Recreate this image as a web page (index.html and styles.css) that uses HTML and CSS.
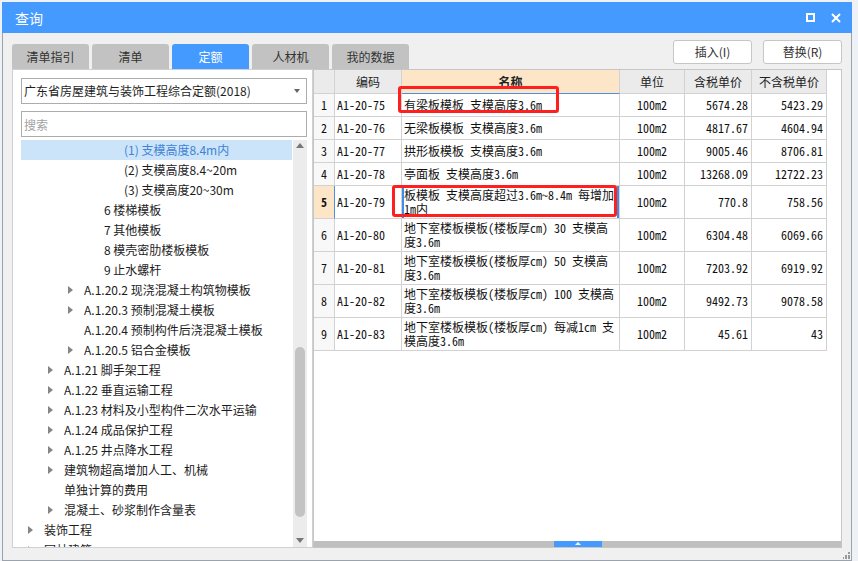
FILE: index.html
```html
<!DOCTYPE html>
<html lang="zh-CN">
<head>
<meta charset="utf-8">
<title>查询</title>
<link rel="stylesheet" href="styles.css">
</head>
<body>
<div class="dialog">
  <div class="titlebar">
    <span class="title">查询</span>
    <div class="win-ctrls">
      <span class="max-btn"></span>
      <svg class="close-btn" width="10" height="10" viewBox="0 0 10 10"><path d="M1 1L9 9M9 1L1 9" stroke="#fff" stroke-width="2"/></svg>
    </div>
  </div>
  <div class="toolbar">
    <div class="tabs">
      <div class="tab">清单指引</div>
      <div class="tab">清单</div>
      <div class="tab active">定额</div>
      <div class="tab">人材机</div>
      <div class="tab">我的数据</div>
    </div>
    <div class="actions">
      <button class="btn">插入(I)</button>
      <button class="btn">替换(R)</button>
    </div>
  </div>
  <div class="main">
    <div class="left-panel">
      <div class="select"><span class="select-text">广东省房屋建筑与装饰工程综合定额(2018)</span><span class="caret"></span></div>
      <input class="search" type="text" placeholder="搜索">
      <div class="tree">
        <div class="tree-rows">
          <div class="node l5 selected"><span class="arrow"></span><span>(1) 支模高度8.4m内</span></div>
          <div class="node l5"><span class="arrow"></span><span>(2) 支模高度8.4~20m</span></div>
          <div class="node l5"><span class="arrow"></span><span>(3) 支模高度20~30m</span></div>
          <div class="node l4"><span class="arrow"></span><span>6 楼梯模板</span></div>
          <div class="node l4"><span class="arrow"></span><span>7 其他模板</span></div>
          <div class="node l4"><span class="arrow"></span><span>8 模壳密肋楼板模板</span></div>
          <div class="node l4"><span class="arrow"></span><span>9 止水螺杆</span></div>
          <div class="node l3"><span class="arrow has"></span><span>A.1.20.2 现浇混凝土构筑物模板</span></div>
          <div class="node l3"><span class="arrow has"></span><span>A.1.20.3 预制混凝土模板</span></div>
          <div class="node l3"><span class="arrow"></span><span>A.1.20.4 预制构件后浇混凝土模板</span></div>
          <div class="node l3"><span class="arrow has"></span><span>A.1.20.5 铝合金模板</span></div>
          <div class="node l2"><span class="arrow has"></span><span>A.1.21 脚手架工程</span></div>
          <div class="node l2"><span class="arrow has"></span><span>A.1.22 垂直运输工程</span></div>
          <div class="node l2"><span class="arrow has"></span><span>A.1.23 材料及小型构件二次水平运输</span></div>
          <div class="node l2"><span class="arrow has"></span><span>A.1.24 成品保护工程</span></div>
          <div class="node l2"><span class="arrow has"></span><span>A.1.25 井点降水工程</span></div>
          <div class="node l2"><span class="arrow has"></span><span>建筑物超高增加人工、机械</span></div>
          <div class="node l2"><span class="arrow"></span><span>单独计算的费用</span></div>
          <div class="node l2"><span class="arrow has"></span><span>混凝土、砂浆制作含量表</span></div>
          <div class="node l1"><span class="arrow has"></span><span>装饰工程</span></div>
          <div class="node l1"><span class="arrow has"></span><span>园林建筑</span></div>
        </div>
        <div class="vscroll">
          <span class="vs-up"></span>
          <span class="vs-thumb"></span>
          <span class="vs-down"></span>
        </div>
      </div>
    </div>
    <div class="right-panel">
      <div class="grid-wrap">
        <table class="grid">
          <colgroup>
            <col class="c-no"><col class="c-code"><col class="c-name"><col class="c-unit"><col class="c-p1"><col class="c-p2">
          </colgroup>
          <thead>
            <tr>
              <th></th><th>编码</th><th class="sel-col">名称</th><th>单位</th><th>含税单价</th><th>不含税单价</th>
            </tr>
          </thead>
          <tbody>
            <tr><td class="no">1</td><td class="code">A1-20-75</td><td class="name">有梁板模板 支模高度3.6m</td><td class="unit">100m2</td><td class="num">5674.28</td><td class="num">5423.29</td></tr>
            <tr><td class="no">2</td><td class="code">A1-20-76</td><td class="name">无梁板模板 支模高度3.6m</td><td class="unit">100m2</td><td class="num">4817.67</td><td class="num">4604.94</td></tr>
            <tr><td class="no">3</td><td class="code">A1-20-77</td><td class="name">拱形板模板 支模高度3.6m</td><td class="unit">100m2</td><td class="num">9005.46</td><td class="num">8706.81</td></tr>
            <tr><td class="no">4</td><td class="code">A1-20-78</td><td class="name">亭面板 支模高度3.6m</td><td class="unit">100m2</td><td class="num">13268.09</td><td class="num">12722.23</td></tr>
            <tr class="tall current"><td class="no">5</td><td class="code">A1-20-79</td><td class="name focus">板模板 支模高度超过3.6m~8.4m 每增加1m内</td><td class="unit">100m2</td><td class="num">770.8</td><td class="num">758.56</td></tr>
            <tr class="tall"><td class="no">6</td><td class="code">A1-20-80</td><td class="name">地下室楼板模板(楼板厚cm) 30 支模高度3.6m</td><td class="unit">100m2</td><td class="num">6304.48</td><td class="num">6069.66</td></tr>
            <tr class="tall"><td class="no">7</td><td class="code">A1-20-81</td><td class="name">地下室楼板模板(楼板厚cm) 50 支模高度3.6m</td><td class="unit">100m2</td><td class="num">7203.92</td><td class="num">6919.92</td></tr>
            <tr class="tall"><td class="no">8</td><td class="code">A1-20-82</td><td class="name">地下室楼板模板(楼板厚cm) 100 支模高度3.6m</td><td class="unit">100m2</td><td class="num">9492.73</td><td class="num">9078.58</td></tr>
            <tr class="tall"><td class="no">9</td><td class="code">A1-20-83</td><td class="name">地下室楼板模板(楼板厚cm) 每减1cm 支模高度3.6m</td><td class="unit">100m2</td><td class="num">45.61</td><td class="num">43</td></tr>
          </tbody>
        </table>
      </div>
      <div class="hscroll"><span class="hthumb"></span></div>
      <div class="mark mark1"></div>
      <div class="mark mark2"></div>
    </div>
  </div>
  <div class="statusbar">
    <svg class="grip" width="7" height="7" viewBox="0 0 7 7">
      <rect x="5" y="0" width="2" height="2" fill="#9a9a9a"/>
      <rect x="2" y="3" width="2" height="2" fill="#9a9a9a"/>
      <rect x="5" y="3" width="2" height="2" fill="#9a9a9a"/>
      <rect x="-1" y="5" width="2" height="2" fill="#9a9a9a"/>
      <rect x="2" y="5" width="2" height="2" fill="#9a9a9a"/>
      <rect x="5" y="5" width="2" height="2" fill="#9a9a9a"/>
    </svg>
  </div>
</div>
</body>
</html>
```
FILE: styles.css
```css
* { box-sizing: border-box; }
html, body { margin: 0; padding: 0; }
body {
  width: 858px;
  height: 561px;
  overflow: hidden;
  background: #eef2f7;
  font-family: "Noto Sans CJK SC", "Microsoft YaHei", sans-serif;
  font-size: 12px;
  color: #222;
}

.dialog {
  margin: 2px 0 0 2px;
  width: 850px;
  height: 559px;
  background: #f0f0f0;
  border: 1px solid #9ba4ae;
  border-top: 0;
  display: flex;
  flex-direction: column;
}

/* title bar */
.titlebar {
  height: 31px;
  margin: 0 -1px;
  background: #449aff;
  color: #fff;
  display: flex;
  align-items: center;
  justify-content: space-between;
  padding: 0 11px 0 13px;
  flex: none;
}
.title { font-size: 14px; line-height: 16px; }
.win-ctrls { display: flex; align-items: center; gap: 16px; }
.max-btn {
  width: 9px;
  height: 9px;
  border: 2px solid #fff;
}
.close-btn { display: block; }

/* toolbar */
.toolbar {
  height: 36px;
  flex: none;
  display: flex;
  justify-content: space-between;
  padding: 0 9px 0 9px;
}
.tabs { display: flex; gap: 3px; align-self: flex-end; }
.tab {
  width: 77px;
  height: 25px;
  background: #c2c2c2;
  color: #333;
  border-radius: 3px 3px 0 0;
  text-align: center;
  line-height: 25px;
  font-size: 12px;
}
.tab.active { background: #449aff; color: #fff; }
.actions { display: flex; gap: 11px; padding-top: 7px; }
.btn {
  width: 79px;
  height: 24px;
  border: 1px solid #c6c6c6;
  border-radius: 3px;
  background: #fff;
  font-family: inherit;
  font-size: 12px;
  color: #333;
  padding: 0;
  line-height: 22px;
}

/* main area */
.main {
  height: 480px;
  flex: none;
  display: flex;
  padding-left: 9px;
}
.left-panel {
  width: 301px;
  height: 479px;
  background: #fff;
  border: 1px solid #cdd1d6;
  padding: 8px 5px 0 8px;
  display: flex;
  flex-direction: column;
}
.select {
  height: 26px;
  border: 1px solid #acacac;
  display: flex;
  align-items: center;
  justify-content: space-between;
  padding: 0 6px 0 2px;
  flex: none;
}
.select-text { font-size: 12px; line-height: 16px; color: #1e1e1e; }
.caret {
  width: 0;
  height: 0;
  border-left: 3px solid transparent;
  border-right: 3px solid transparent;
  border-top: 4px solid #666;
}
.search {
  margin-top: 7px;
  height: 26px;
  border: 1px solid #acacac;
  padding: 0 2px;
  font-family: inherit;
  font-size: 12px;
  outline: none;
  flex: none;
}
.search::placeholder { color: #a2a2a2; }

.tree {
  margin-top: 3px;
  flex: 1;
  display: flex;
  overflow: hidden;
}
.tree-rows { flex: 1; overflow: hidden; }
.node {
  height: 20px;
  display: flex;
  align-items: center;
  white-space: nowrap;
  font-size: 12px;
  line-height: 16px;
  color: #1c1c1c;
}
.node.l1 { padding-left: 7px; }
.node.l2 { padding-left: 27px; }
.node.l3 { padding-left: 47px; }
.node.l4 { padding-left: 67px; }
.node.l5 { padding-left: 87px; }
.node.selected { background: #cbe4f9; color: #3f82d6; }
.arrow { width: 16px; flex: none; height: 20px; position: relative; }
.arrow.has::before {
  content: "";
  position: absolute;
  left: 0;
  top: 6px;
  border-left: 5px solid #858585;
  border-top: 4px solid transparent;
  border-bottom: 4px solid transparent;
}

.vscroll {
  width: 14px;
  flex: none;
  margin-left: 1px;
  background: #ececec;
  display: flex;
  flex-direction: column;
  align-items: center;
}
.vs-up {
  margin-top: 3px;
  border-left: 4px solid transparent;
  border-right: 4px solid transparent;
  border-bottom: 5px solid #777;
}
.vs-thumb {
  margin-top: 199px;
  width: 10px;
  height: 170px;
  background: #c3c3c3;
  border-radius: 5px;
}
.vs-down {
  margin-top: auto;
  margin-bottom: 4px;
  border-left: 4px solid transparent;
  border-right: 4px solid transparent;
  border-top: 5px solid #777;
}

.right-panel {
  width: 529px;
  height: 479px;
  background: #fff;
  border: 1px solid #c6c6c6;
  position: relative;
  display: flex;
  flex-direction: column;
}
.grid-wrap { flex: 1; overflow: hidden; }
.grid {
  border-collapse: separate;
  border-spacing: 0;
  table-layout: fixed;
  width: 513px;
  font-family: "Noto Sans Mono CJK SC", "Liberation Mono", monospace;
  font-size: 12px;
  color: #111;
}
.c-no { width: 21px; }
.c-code { width: 67px; }
.c-name { width: 218px; }
.c-unit { width: 65px; }
.c-p1 { width: 67px; }
.c-p2 { width: 75px; }
.grid th, .grid td {
  border-right: 1px solid #d2d2d2;
  border-bottom: 1px solid #d2d2d2;
  padding: 0;
  overflow: hidden;
}
.grid th {
  height: 24px;
  background: #ebebeb;
  font-family: "Noto Sans CJK SC", "Microsoft YaHei", sans-serif;
  font-weight: normal;
  font-size: 12px;
  color: #222;
  line-height: 16px;
  text-align: center;
}
.grid th.sel-col { background: #fde6c8; border-bottom-color: #4a90e2; font-weight: bold; }
.grid td { height: 23px; line-height: 14px; }
.grid tr.tall td { height: 33px; }
.grid td.no { text-align: center; background: #f8f8f8; }
.grid tr.current td.no { background: #fde6c8; font-weight: bold; border-right-color: #4a90e2; }
.grid td.code { padding-left: 2px; }
.grid td.name { padding: 2px; }
.grid td.focus { box-shadow: inset 2px 0 #3d8ee8, inset -2px 0 #3d8ee8; }
.grid td.unit { text-align: center; }
.grid td.num { text-align: right; padding-right: 3px; }

.hscroll {
  height: 6px;
  flex: none;
  background: #bfbfbf;
  display: flex;
  justify-content: center;
}
.hthumb {
  width: 48px;
  height: 6px;
  background: #449aff;
  position: relative;
}
.hthumb::after {
  content: "";
  position: absolute;
  left: 21px;
  top: 1px;
  border-left: 3px solid transparent;
  border-right: 3px solid transparent;
  border-bottom: 3px solid #fff;
}

.mark {
  position: absolute;
  border: 3px solid #ff1f1f;
  border-radius: 3px;
}
.mark1 { left: 84px; top: 16px; width: 161px; height: 27px; }
.mark2 { left: 78px; top: 115px; width: 225px; height: 32px; }

.statusbar {
  flex: 1;
  display: flex;
  justify-content: flex-end;
  align-items: flex-end;
  padding: 0 1px 1px 0;
}
.grip { display: block; }
```
